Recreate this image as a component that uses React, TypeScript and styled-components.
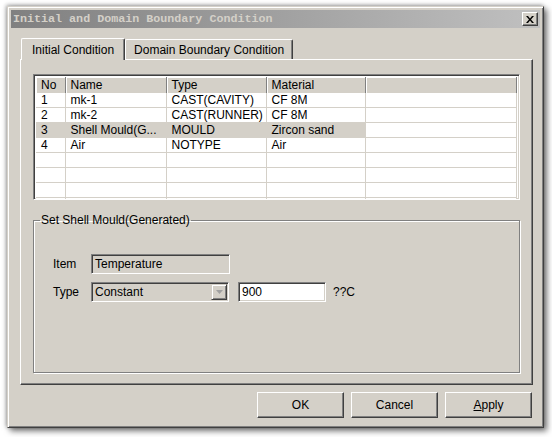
import styled, { createGlobalStyle } from "styled-components";

const GlobalStyle = createGlobalStyle`
  html, body {
    margin: 0;
    padding: 0;
    background: #ffffff;
  }
  body {
    font-family: "Liberation Sans", Arial, sans-serif;
    font-size: 12px;
    color: #000;
  }
`;

const Screen = styled.div`
  width: 552px;
  height: 437px;
  padding: 6px 0 0 7px;
  box-sizing: border-box;
  background: #ffffff;
  overflow: hidden;
`;

// classic dialog frame
const Window = styled.div`
  width: 537px;
  height: 422px;
  box-sizing: border-box;
  background: #d4d0c8;
  border: 1px solid;
  border-color: #d4d0c8 #404040 #404040 #d4d0c8;
  box-shadow: inset 1px 1px 0 #ffffff, inset -1px -1px 0 #808080,
    3px 3px 6px rgba(0, 0, 0, 0.55), -1px -1px 4px rgba(0, 0, 0, 0.35);
  padding: 3px;
  display: flex;
  flex-direction: column;
`;

const TitleBar = styled.div`
  height: 18px;
  display: flex;
  align-items: center;
  justify-content: space-between;
  padding: 0 2px 0 2px;
  background: linear-gradient(to right, #808080, #c0c0c0);
`;

const Title = styled.span`
  font-family: "Liberation Mono", "Courier New", monospace;
  font-weight: bold;
  font-size: 11.7px;
  color: #d4d0c8;
  white-space: nowrap;
`;

const CloseButton = styled.div`
  width: 16px;
  height: 14px;
  box-sizing: border-box;
  background: #d4d0c8;
  border: 1px solid;
  border-color: #ffffff #404040 #404040 #ffffff;
  box-shadow: inset -1px -1px 0 #808080;
  display: flex;
  align-items: center;
  justify-content: center;
`;

const Body = styled.div`
  flex: 1;
  display: flex;
  flex-direction: column;
  padding: 9px 7px 0 9px;
`;

const TabStrip = styled.div`
  display: flex;
  align-items: flex-end;
  height: 22px;
  padding-left: 1px;
  position: relative;
  z-index: 1;
`;

const Tab = styled.div<{ active?: boolean }>`
  box-sizing: border-box;
  height: ${(p) => (p.active ? "22px" : "20px")};
  padding: 0 ${(p) => (p.active ? "10px" : "8px")};
  display: flex;
  align-items: center;
  background: #d4d0c8;
  border-top: 1px solid #ffffff;
  border-left: 1px solid #ffffff;
  border-right: 1px solid #404040;
  border-radius: 2px 2px 0 0;
  box-shadow: inset -1px 0 0 #808080;
  margin-bottom: ${(p) => (p.active ? "-1px" : "0")};
  white-space: nowrap;
`;

const Panel = styled.div`
  box-sizing: border-box;
  height: 326px;
  border: 1px solid;
  border-color: #ffffff #404040 #404040 #ffffff;
  box-shadow: inset -1px -1px 0 #808080;
  padding: 14px 12px 0 12px;
  display: flex;
  flex-direction: column;
  gap: 13px;
`;

const ListBox = styled.div`
  height: 126px;
  box-sizing: border-box;
  border: 1px solid;
  border-color: #808080 #ffffff #ffffff #808080;
  box-shadow: inset 1px 1px 0 #404040, inset -1px -1px 0 #d4d0c8;
  padding: 2px 2px 1px 2px;
  background: #ffffff;
  overflow: hidden;
`;

const Table = styled.table`
  width: 100%;
  border-collapse: collapse;
  table-layout: fixed;
`;

const HeaderCell = styled.th<{ w?: number }>`
  width: ${(p) => (p.w ? `${p.w}px` : "auto")};
  height: 16px;
  padding: 0 0 0 5px;
  box-sizing: border-box;
  background: #d4d0c8;
  text-align: left;
  font-weight: normal;
  border-right: 1px solid #808080;
  box-shadow: inset 1px 1px 0 #ffffff;
  white-space: nowrap;
  line-height: 15px;
`;

const Row = styled.tr<{ selected?: boolean }>`
  background: ${(p) => (p.selected ? "#d4d0c8" : "#ffffff")};
`;

const Cell = styled.td`
  padding: 0 0 0 5px;
  height: 14px;
  box-sizing: content-box;
  border-right: 1px solid #d4d0c8;
  border-bottom: 1px solid #d4d0c8;
  white-space: nowrap;
  overflow: hidden;
  line-height: 14px;
`;

const BlankCell = styled(Cell)`
  background: #ffffff;
`;

const Group = styled.fieldset`
  margin: 0;
  height: 160px;
  box-sizing: border-box;
  padding: 27px 0 0 6px;
  border: 1px solid #808080;
  box-shadow: 1px 1px 0 #ffffff, inset 1px 1px 0 #ffffff;
  display: flex;
  flex-direction: column;
  gap: 8px;
`;

const Legend = styled.legend`
  padding: 0 1px;
`;

const FieldRow = styled.div`
  display: flex;
  align-items: center;
  height: 20px;
  padding-left: 13px;
`;

const FieldLabel = styled.span`
  width: 38px;
`;

const Input = styled.div<{ disabled?: boolean; w: number; gap?: number }>`
  width: ${(p) => p.w}px;
  height: 20px;
  margin-left: ${(p) => p.gap ?? 0}px;
  box-sizing: border-box;
  border: 1px solid;
  border-color: #808080 #ffffff #ffffff #808080;
  box-shadow: inset 1px 1px 0 #404040, inset -1px -1px 0 #d4d0c8;
  background: ${(p) => (p.disabled ? "#d4d0c8" : "#ffffff")};
  padding: 0 0 0 3px;
  display: flex;
  align-items: center;
  justify-content: space-between;
`;

const ComboArrow = styled.div`
  width: 16px;
  height: 16px;
  margin-right: 1px;
  box-sizing: border-box;
  background: #d4d0c8;
  border: 1px solid;
  border-color: #d4d0c8 #404040 #404040 #d4d0c8;
  box-shadow: inset 1px 1px 0 #ffffff, inset -1px -1px 0 #808080;
  display: flex;
  align-items: center;
  justify-content: center;
`;

const Unit = styled.span`
  margin-left: 7px;
`;

const Footer = styled.div`
  display: flex;
  justify-content: flex-end;
  gap: 7px;
  padding: 7px 1px 0 0;
`;

const Button = styled.div`
  width: 87px;
  height: 26px;
  box-sizing: border-box;
  background: #d4d0c8;
  border: 1px solid;
  border-color: #ffffff #404040 #404040 #ffffff;
  box-shadow: inset -1px -1px 0 #808080;
  display: flex;
  align-items: center;
  justify-content: center;
`;

const rows = [
  { no: "1", name: "mk-1", type: "CAST(CAVITY)", mat: "CF 8M" },
  { no: "2", name: "mk-2", type: "CAST(RUNNER)", mat: "CF 8M" },
  { no: "3", name: "Shell Mould(G...", type: "MOULD", mat: "Zircon sand", selected: true },
  { no: "4", name: "Air", type: "NOTYPE", mat: "Air" },
];

function App() {
  const blank = Array.from({ length: 4 });
  return (
    <Screen>
      <GlobalStyle />
      <Window>
        <TitleBar>
          <Title>Initial and Domain Boundary Condition</Title>
          <CloseButton>
            <svg width="8" height="7" viewBox="0 0 8 7">
              <path d="M0 0h2l2 2.5L6 0h2L5 3.5 8 7H6L4 4.5 2 7H0l3-3.5z" fill="#000" />
            </svg>
          </CloseButton>
        </TitleBar>
        <Body>
          <TabStrip>
            <Tab active>Initial Condition</Tab>
            <Tab>Domain Boundary Condition</Tab>
          </TabStrip>
          <Panel>
            <ListBox>
              <Table>
                <thead>
                  <tr>
                    <HeaderCell w={29}>No</HeaderCell>
                    <HeaderCell w={101}>Name</HeaderCell>
                    <HeaderCell w={100}>Type</HeaderCell>
                    <HeaderCell w={99}>Material</HeaderCell>
                    <HeaderCell />
                  </tr>
                </thead>
                <tbody>
                  {rows.map((r) => (
                    <Row key={r.no} selected={r.selected}>
                      <Cell>{r.no}</Cell>
                      <Cell>{r.name}</Cell>
                      <Cell>{r.type}</Cell>
                      <Cell>{r.mat}</Cell>
                      <BlankCell />
                    </Row>
                  ))}
                  {blank.map((_, i) => (
                    <Row key={`b${i}`}>
                      <Cell />
                      <Cell />
                      <Cell />
                      <Cell />
                      <Cell />
                    </Row>
                  ))}
                </tbody>
              </Table>
            </ListBox>
            <Group>
              <Legend>Set Shell Mould(Generated)</Legend>
              <FieldRow>
                <FieldLabel>Item</FieldLabel>
                <Input disabled w={139}>Temperature</Input>
              </FieldRow>
              <FieldRow>
                <FieldLabel>Type</FieldLabel>
                <Input disabled w={138}>
                  Constant
                  <ComboArrow>
                    <svg width="7" height="4" viewBox="0 0 7 4">
                      <path d="M0 0h7L3.5 4z" fill="#a0a0a0" />
                    </svg>
                  </ComboArrow>
                </Input>
                <Input w={88} gap={9}>900</Input>
                <Unit>??C</Unit>
              </FieldRow>
            </Group>
          </Panel>
          <Footer>
            <Button>OK</Button>
            <Button>Cancel</Button>
            <Button>
              <span>
                <u>A</u>pply
              </span>
            </Button>
          </Footer>
        </Body>
      </Window>
    </Screen>
  );
}

export default App;
